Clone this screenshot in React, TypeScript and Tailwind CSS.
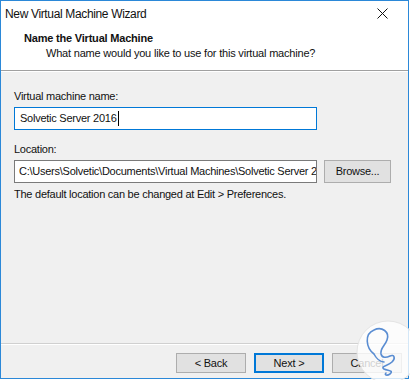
import React from "react";

const font = { fontFamily: '"Liberation Sans", Arial, sans-serif' };

function Btn({ label, primary }: { label: string; primary?: boolean }) {
  return (
    <div
      className={
        "flex h-[20px] w-[70px] items-center justify-center bg-[#e1e1e1] text-[11px] tracking-[-0.2px] text-[#111] " +
        (primary ? "border-2 border-[#0078d7]" : "border border-[#adadad]")
      }
    >
      {label}
    </div>
  );
}

export default function App() {
  return (
    <div className="relative h-[380px] w-[410px] overflow-hidden bg-white" style={font}>
      <div className="flex h-[379px] w-[409px] flex-col border border-[#2b88d8] bg-[#f0f0f0]">
        {/* title bar */}
        <div className="flex h-[25px] shrink-0 items-center justify-between bg-white pl-[4px] pr-[20px] text-[12px] tracking-[-0.35px] text-[#111]">
          <span>New Virtual Machine Wizard</span>
          <svg width="11" height="11" viewBox="0 0 11 11">
            <path d="M0.5 0.5 L10.5 10.5 M10.5 0.5 L0.5 10.5" stroke="#111" strokeWidth="1" />
          </svg>
        </div>
        {/* header */}
        <div className="flex h-[44px] shrink-0 flex-col bg-white pl-[23px] pt-[5px] text-[11px] leading-[15px] tracking-[-0.2px] text-[#111]">
          <span className="font-bold">Name the Virtual Machine</span>
          <span className="pl-[22px]">What name would you like to use for this virtual machine?</span>
        </div>
        <div className="h-[1px] shrink-0 bg-[#a0a0a0]" />
        <div className="h-[1px] shrink-0 bg-white" />

        {/* body */}
        <div className="flex flex-1 flex-col px-[13px] pt-[17px] text-[11px] tracking-[-0.25px] text-[#111]">
          <span className="leading-[15px]">Virtual machine name:</span>
          <div className="mt-[3px] flex h-[23px] w-[303px] items-center border border-[#0078d7] bg-white pl-[5px]">
            <span>Solvetic Server 2016</span>
            <span className="ml-[1px] h-[15px] w-[1px] bg-black" />
          </div>
          <span className="mt-[12px] leading-[15px]">Location:</span>
          <div className="mt-[3px] flex items-center gap-[7px]">
            <div className="flex h-[23px] w-[303px] items-center overflow-hidden whitespace-nowrap border border-[#7a7a7a] bg-white pl-[4px]">
              C:\Users\Solvetic\Documents\Virtual Machines\Solvetic Server 2
            </div>
            <div className="flex h-[23px] w-[67px] items-center justify-center border border-[#adadad] bg-[#e1e1e1]">
              Browse...
            </div>
          </div>
          <span className="mt-[4px] leading-[15px]">The default location can be changed at Edit &gt; Preferences.</span>
        </div>

        {/* footer */}
        <div className="h-[1px] shrink-0 bg-[#d0d0d0]" />
        <div className="h-[1px] shrink-0 bg-white" />
        <div className="flex h-[33px] shrink-0 items-start justify-end gap-[8px] pr-[6px] pt-[8px]">
          <Btn label="< Back" />
          <Btn label="Next >" primary />
          <Btn label="Cancel" />
        </div>
      </div>

      {/* watermark */}
      <svg className="absolute left-[350px] top-[318px]" width="60" height="62" viewBox="0 0 60 62">
        <circle cx="38" cy="34" r="31" fill="white" fillOpacity="0.8" stroke="#e4e4e4" strokeWidth="1" />
        <path
          d="M24 36 C16 30 14 16 24 12 C32 8 40 14 37 22 C35 28 30 30 31 36 C32 40 36 40 40 38 C44 36 46 40 42 44 C38 48 30 48 34 51 C38 53 44 52 40 56 C37 58 34 57 36 55 M24 36 C26 40 30 44 34 44"
          fill="none"
          stroke="#5a8dd2"
          strokeWidth="1.6"
          strokeLinecap="round"
        />
      </svg>
    </div>
  );
}
